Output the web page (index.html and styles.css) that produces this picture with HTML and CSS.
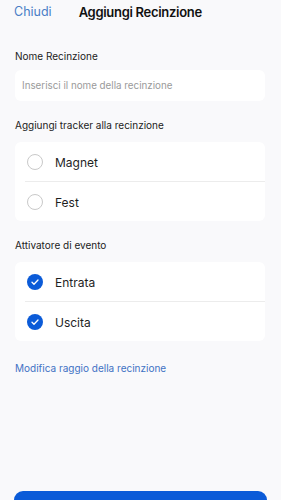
FILE: index.html
```html
<!DOCTYPE html>
<html lang="it">
<head>
<meta charset="UTF-8" />
<meta name="viewport" content="width=device-width, initial-scale=1.0"/>
<title>Aggiungi Recinzione</title>
<link rel="stylesheet" href="styles.css">
</head>
<body>

<div class="header">
  <a class="close" href="#">Chiudi</a>
  <div class="title">Aggiungi Recinzione</div>
</div>

<div class="content">
  <div class="label first">Nome Recinzione</div>
  <div class="card input-card">
    <input type="text" placeholder="Inserisci il nome della recinzione" />
  </div>

  <div class="label">Aggiungi tracker alla recinzione</div>
  <div class="card list">
    <div class="row">
      <span class="radio"></span>
      <span class="row-text">Magnet</span>
    </div>
    <div class="row">
      <span class="radio"></span>
      <span class="row-text">Fest</span>
    </div>
  </div>

  <div class="label">Attivatore di evento</div>
  <div class="card list">
    <div class="row">
      <span class="check">
        <svg viewBox="0 0 16 16" width="16" height="16"><path d="M5 8.3l2 2 4-4.3" fill="none" stroke="#fff" stroke-width="1.3" stroke-linecap="round" stroke-linejoin="round"/></svg>
      </span>
      <span class="row-text">Entrata</span>
    </div>
    <div class="row">
      <span class="check">
        <svg viewBox="0 0 16 16" width="16" height="16"><path d="M5 8.3l2 2 4-4.3" fill="none" stroke="#fff" stroke-width="1.3" stroke-linecap="round" stroke-linejoin="round"/></svg>
      </span>
      <span class="row-text">Uscita</span>
    </div>
  </div>

  <a class="link" href="#">Modifica raggio della recinzione</a>
</div>

<button class="save" aria-label="Salva"></button>

</body>
</html>
```

FILE: styles.css
```css
body {
  margin: 0;
  font-family: Inter, "Noto Sans", sans-serif;
  background-color: #f9f9fb;
  color: #1f1f1f;
  overflow: hidden;
}
.header {
  display: flex;
  align-items: center;
  height: 23px;
  padding: 0 14px;
  gap: 27px;
}
.close {
  color: #4a7ec6;
  font-size: 12.5px;
  text-decoration: none;
}
.title {
  font-size: 13px;
  font-weight: 600;
  letter-spacing: -0.3px;
  color: #111;
}
.content {
  padding: 0 16px 0 15px;
}
.label {
  font-size: 10px;
  line-height: 14px;
  margin: 17px 0 10px;
  color: #222;
}
.label.first {
  margin: 26px 0 7px;
}
.card {
  background-color: #fff;
  border-radius: 6px;
}
.input-card {
  height: 31px;
  display: flex;
  align-items: center;
}
.input-card input {
  border: none;
  outline: none;
  background: transparent;
  width: 100%;
  padding: 0 7px;
  font-family: inherit;
  font-size: 9.8px;
}
.input-card input::placeholder {
  color: #9a9a9a;
}
.list .row {
  display: flex;
  align-items: center;
  height: 39px;
  padding: 1px 0 0 12px;
  box-sizing: border-box;
  gap: 12px;
}
.list .row + .row {
  border-top: 1px solid #ececec;
  margin-left: 10px;
  padding-left: 2px;
  height: 40px;
}
.row-text {
  font-size: 12px;
  color: #1f1f1f;
}
.radio {
  width: 14px;
  height: 14px;
  border: 1.3px solid #c9c9c9;
  border-radius: 50%;
}
.check {
  width: 16px;
  height: 16px;
  border-radius: 50%;
  background-color: #0b5bd8;
  display: flex;
}
.link {
  display: block;
  margin-top: 20px;
  font-size: 10px;
  line-height: 14px;
  color: #3f72c4;
  text-decoration: none;
}
.save {
  display: block;
  margin: 116px 14px 0 14px;
  width: 253px;
  height: 44px;
  border: none;
  border-radius: 9px;
  background-color: #0b5bd8;
}
```
